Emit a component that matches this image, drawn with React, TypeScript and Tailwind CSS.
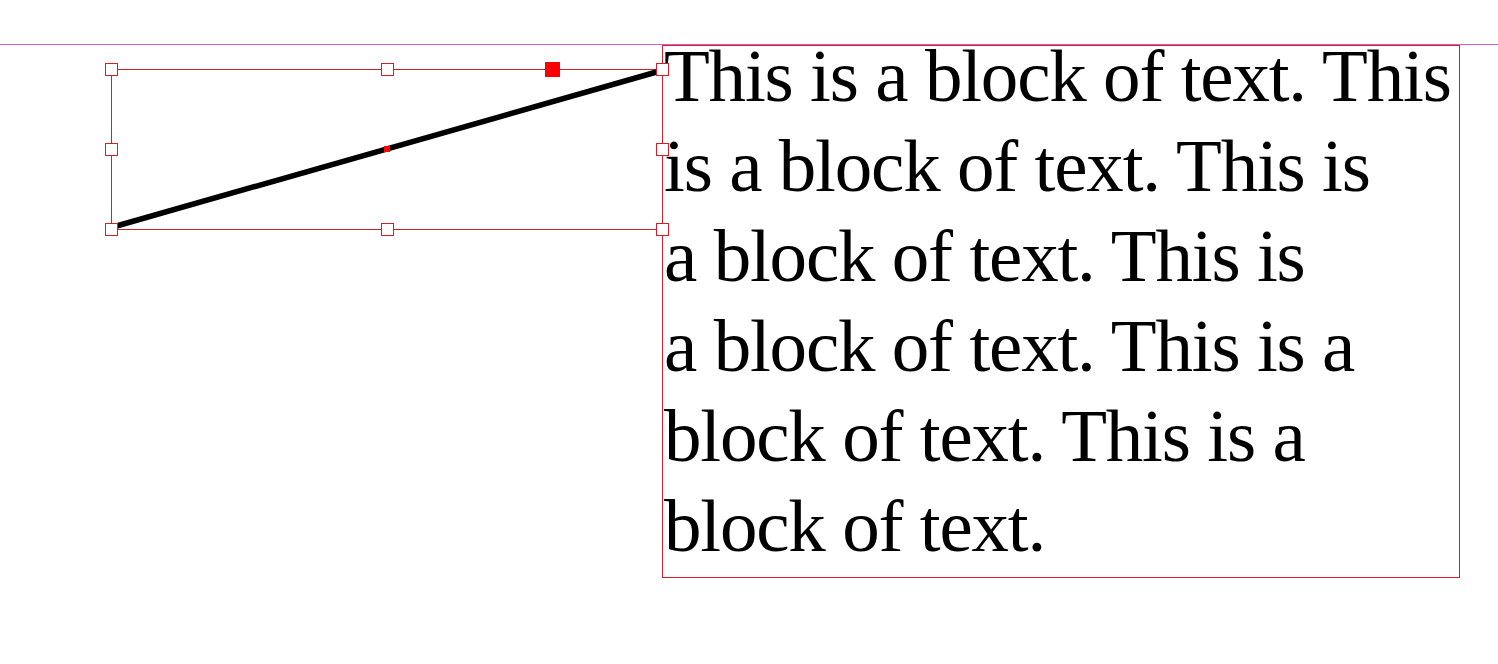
import * as React from "react";

/**
 * Canvas - a layout document with a selected line and a text frame
 */

const Handle: React.FC<{ x: number; y: number }> = ({ x, y }) => (
  <div
    className="absolute w-[13px] h-[13px] border border-[#d21f2a] bg-white"
    style={{ left: x - 6, top: y - 6 }}
  />
);

const lines = [
  "This is a block of text. This",
  "is a block of text. This is",
  "a block of text. This is",
  "a block of text. This is a",
  "block of text. This is a",
  "block of text.",
];

export default function App() {
  const handles: [number, number][] = [
    [111, 69],
    [387, 69],
    [662, 69],
    [111, 149],
    [662, 149],
    [111, 229],
    [387, 229],
    [662, 229],
  ];

  return (
    <div className="relative w-[1498px] h-[664px] bg-white overflow-hidden">
      {/* guide */}
      <div className="absolute left-0 right-0 top-[44px] h-px bg-[#d060d0]" />

      {/* text frame */}
      <div className="absolute left-[662px] top-[45px] w-[798px] h-[533px] border border-[#d21f2a]">
        <div
          className="-mt-[15px] pl-[1px] text-black text-[75px] leading-[90px] tracking-[-1.2px]"
          style={{ fontFamily: '"Liberation Serif", "Times New Roman", serif' }}
        >
          {lines.map((l, i) => (
            <div key={i} className="whitespace-nowrap">
              {l}
            </div>
          ))}
        </div>
      </div>

      {/* selection bounding box */}
      <div className="absolute left-[111px] top-[69px] w-[552px] h-[161px] border border-[#d21f2a]" />

      {/* the line itself */}
      <svg className="absolute left-0 top-0" width="1498" height="664">
        <line x1="113" y1="227" x2="660" y2="71" stroke="#000" strokeWidth="5.5" />
      </svg>

      {handles.map(([x, y], i) => (
        <Handle key={i} x={x} y={y} />
      ))}

      {/* center point */}
      <div className="absolute left-[384px] top-[146px] w-[6px] h-[6px] bg-[#ff0000]" />

      {/* reference point */}
      <div className="absolute left-[545px] top-[62px] w-[15px] h-[15px] bg-[#ff0000]" />
    </div>
  );
}
